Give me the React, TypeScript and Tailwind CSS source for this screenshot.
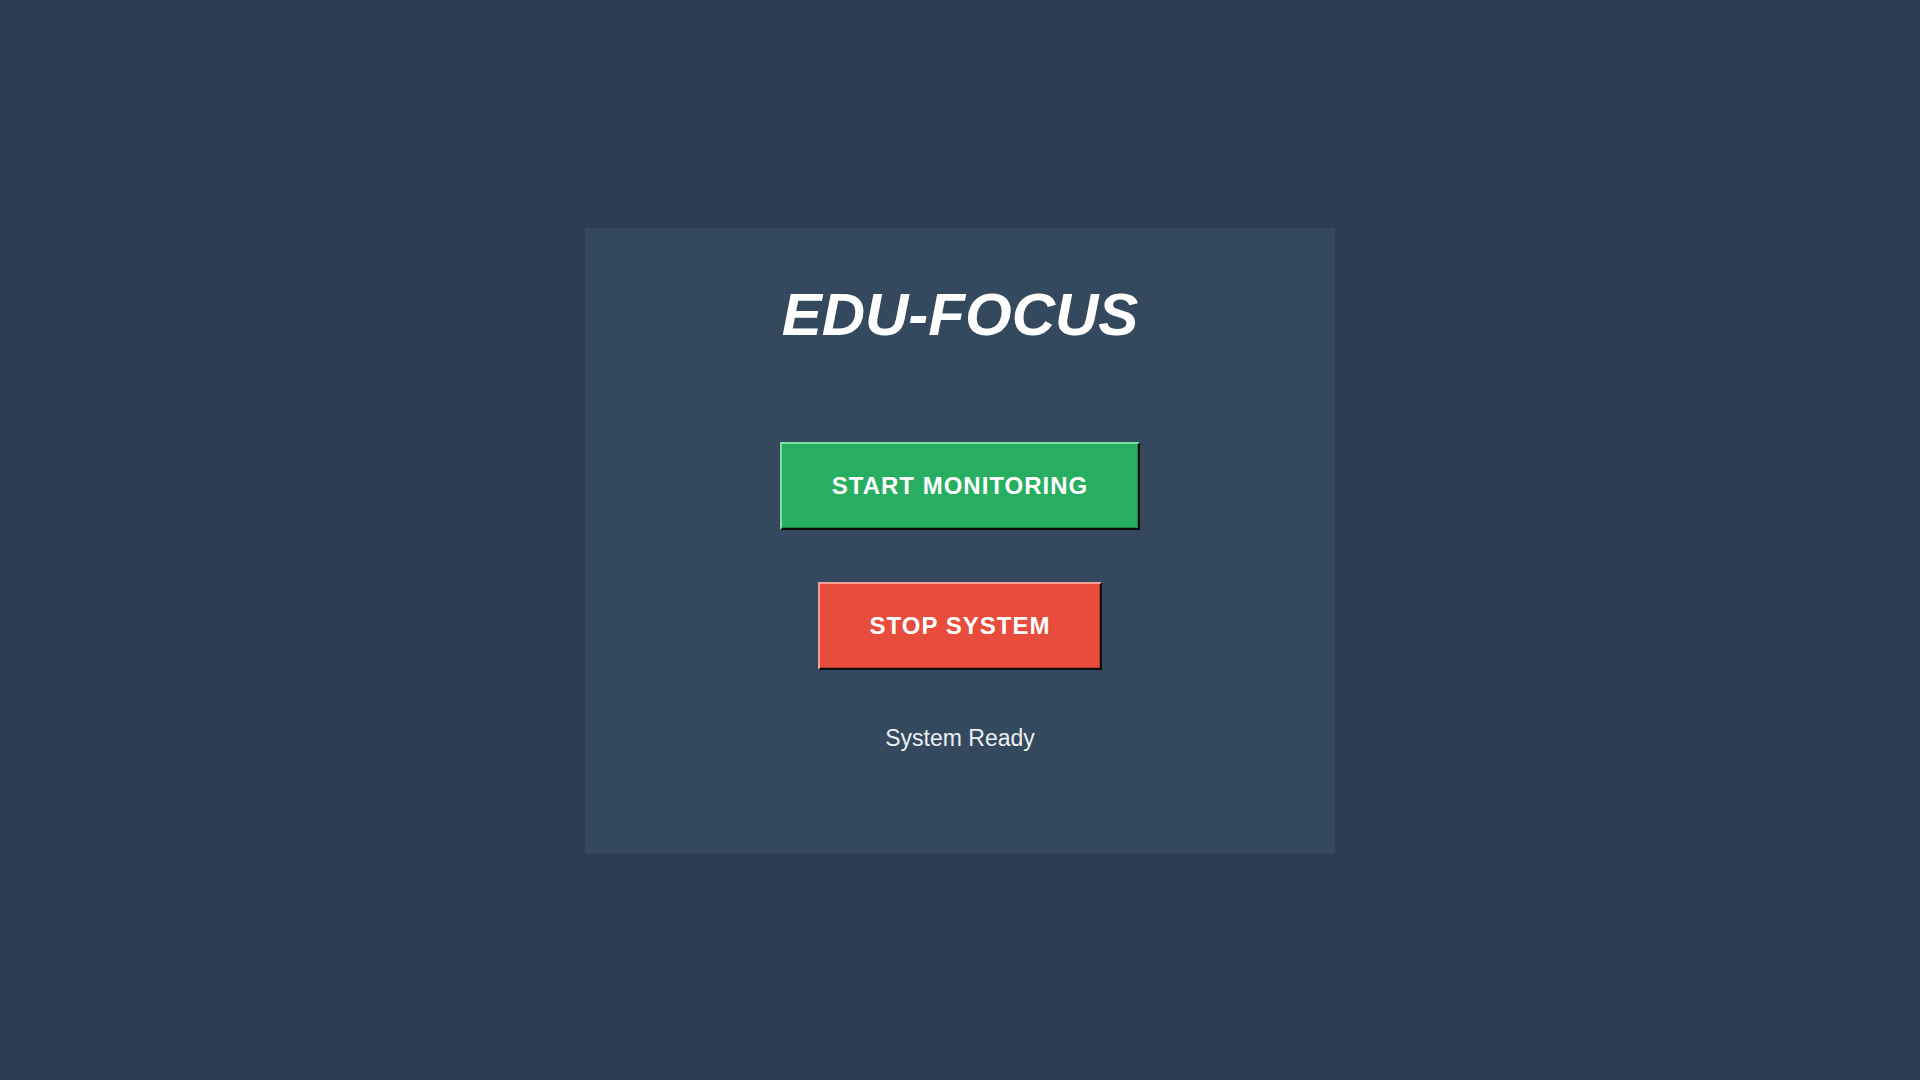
import { useState } from "react";

export default function App() {
  const [status, setStatus] = useState("System Ready");

  return (
    <div className="min-h-screen w-full bg-[#2c3e50] flex items-center justify-center font-['Liberation_Sans',Arial,sans-serif]">
      <div className="w-[750px] h-[625px] bg-[#34495e] flex flex-col items-center pt-[54px]">
        <h1 className="text-[60px] leading-[66px] font-bold italic text-white">
          EDU-FOCUS
        </h1>

        <button
          onClick={() => setStatus("Monitoring...")}
          className="mt-[94px] px-[50px] py-[29px] bg-[#27ae60] text-white text-[24px] leading-[26px] font-bold tracking-[1px] border-t-2 border-l-2 border-r-2 border-b-2 border-t-[#7fe0a3] border-l-[#7fe0a3] border-r-[#0b0b0b] border-b-[#0b0b0b] shadow-[inset_-1px_-1px_0_#1e8449]"
        >
          START MONITORING
        </button>

        <button
          onClick={() => setStatus("System Stopped")}
          className="mt-[52px] px-[50px] py-[29px] bg-[#e74c3c] text-white text-[24px] leading-[26px] font-bold tracking-[1px] border-t-2 border-l-2 border-r-2 border-b-2 border-t-[#f4a097] border-l-[#f4a097] border-r-[#0b0b0b] border-b-[#0b0b0b] shadow-[inset_-1px_-1px_0_#b03a2e]"
        >
          STOP SYSTEM
        </button>

        <p className="mt-[55px] text-[23px] leading-[26px] text-[#ecf0f1]">{status}</p>
      </div>
    </div>
  );
}
